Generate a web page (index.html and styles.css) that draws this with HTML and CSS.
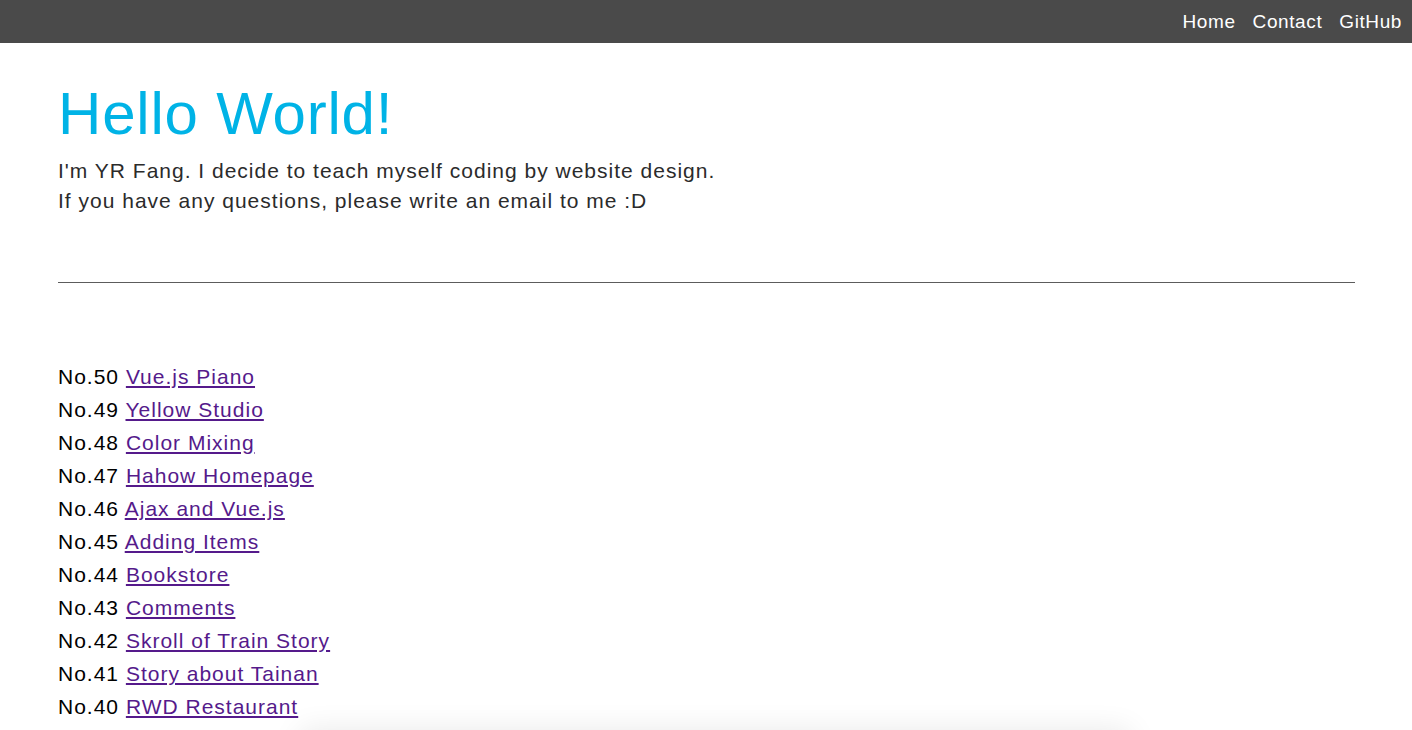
FILE: index.html
```html
<!DOCTYPE html>
<html lang="en">
<head>
<meta charset="utf-8">
<title>YR Fang</title>
<link rel="stylesheet" href="styles.css">
</head>
<body>
<nav class="topbar">
  <a class="nav-link" href="#">Home</a>
  <a class="nav-link" href="#">Contact</a>
  <a class="nav-link" href="#">GitHub</a>
</nav>
<main class="content">
  <h1 class="title">Hello World!</h1>
  <p class="intro">I'm YR Fang. I decide to teach myself coding by website design.<br>If you have any questions, please write an email to me :D</p>
  <hr class="divider">
  <ul class="works">
    <li>No.50 <a href="#">Vue.js Piano</a></li>
    <li>No.49 <a href="#">Yellow Studio</a></li>
    <li>No.48 <a href="#">Color Mixing</a></li>
    <li>No.47 <a href="#">Hahow Homepage</a></li>
    <li>No.46 <a href="#">Ajax and Vue.js</a></li>
    <li>No.45 <a href="#">Adding Items</a></li>
    <li>No.44 <a href="#">Bookstore</a></li>
    <li>No.43 <a href="#">Comments</a></li>
    <li>No.42 <a href="#">Skroll of Train Story</a></li>
    <li>No.41 <a href="#">Story about Tainan</a></li>
    <li>No.40 <a href="#">RWD Restaurant</a></li>
  </ul>
</main>
<div class="bottom-panel"></div>
</body>
</html>
```

FILE: styles.css
```css
html, body {
  margin: 0;
  padding: 0;
  background: #ffffff;
}
body {
  font-family: "Liberation Sans", Arial, sans-serif;
  color: #222;
}
.topbar {
  height: 43px;
  background: #4a4a4a;
  display: flex;
  justify-content: flex-end;
  align-items: center;
  gap: 17px;
  padding-right: 10px;
}
.nav-link {
  color: #ffffff;
  text-decoration: none;
  font-size: 19px;
  line-height: 1;
  letter-spacing: 0.6px;
}
.content {
  padding: 0 57px 0 58px;
}
.title {
  margin: 41px 0 0;
  font-size: 60px;
  line-height: 60px;
  font-weight: normal;
  letter-spacing: 0.8px;
  color: #00b3e6;
}
.intro {
  margin: 12px 0 0;
  font-size: 21px;
  line-height: 30px;
  letter-spacing: 1px;
  color: #2b2b2b;
}
.divider {
  margin: 66px 0 0;
  border: 0;
  border-top: 1px solid #5c5c5c;
  height: 0;
}
.works {
  list-style: none;
  margin: 77px 0 0;
  padding: 0;
  font-size: 21px;
  line-height: 33px;
  letter-spacing: 1px;
  color: #000;
}
.works a {
  color: #551a8b;
}
.bottom-panel {
  position: fixed;
  left: 300px;
  width: 830px;
  bottom: -40px;
  height: 40px;
  background: #fff;
  box-shadow: 0 0 30px rgba(0, 0, 0, 0.09);
}
```
